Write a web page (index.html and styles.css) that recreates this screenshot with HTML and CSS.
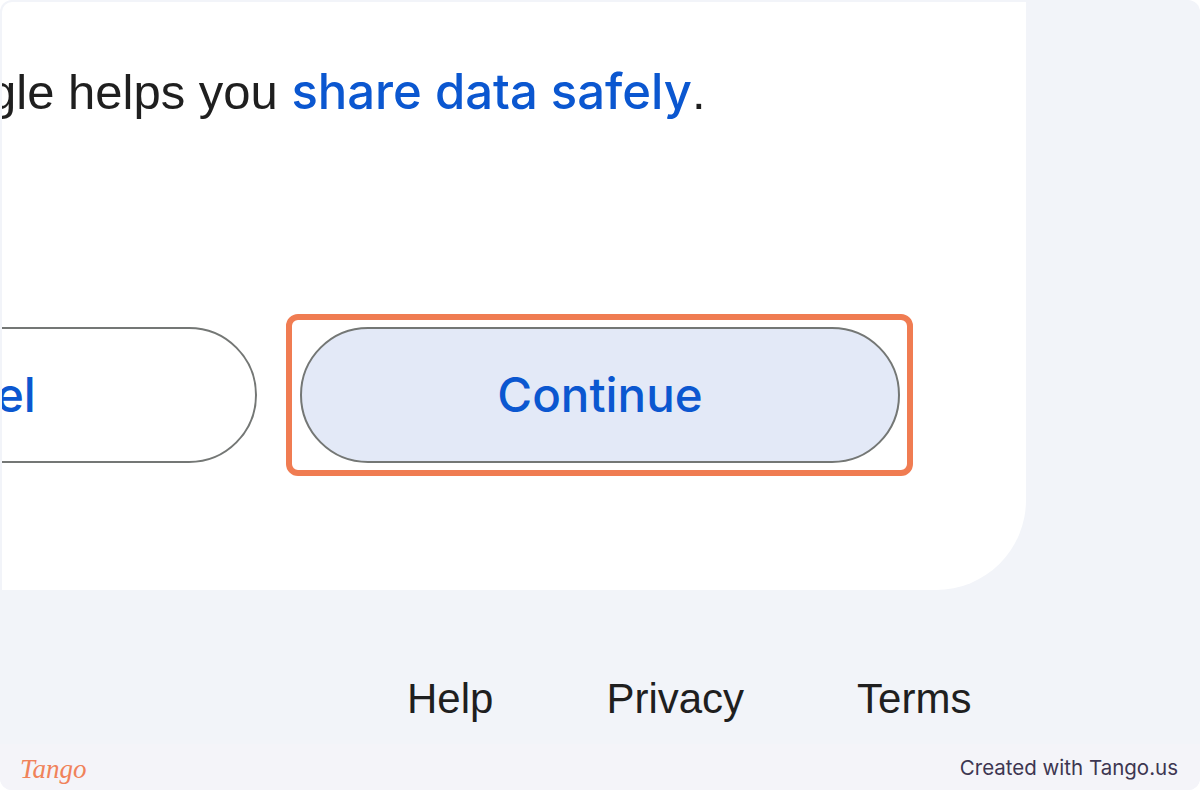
FILE: index.html
```html
<!DOCTYPE html>
<html lang="en">
<head>
<meta charset="utf-8">
<title>Continue</title>
<link rel="stylesheet" href="styles.css">
</head>
<body>
<div class="frame">
  <main class="stage">
    <section class="card">
      <p class="lead">gle helps you <a class="lead-link" href="#">share data safely</a>.</p>
      <div class="actions">
        <button class="btn btn-outline" type="button">Cancel</button>
        <div class="focus-wrap">
          <button class="btn btn-tonal" type="button">Continue</button>
          <span class="highlight"></span>
        </div>
      </div>
    </section>
    <nav class="links">
      <a class="link" href="#">Help</a>
      <a class="link" href="#">Privacy</a>
      <a class="link" href="#">Terms</a>
    </nav>
  </main>
  <footer class="tango-bar">
    <span class="tango-logo">Tango</span>
    <span class="tango-credit">Created with Tango.us</span>
  </footer>
</div>
</body>
</html>
```

FILE: styles.css
```css
* { box-sizing: border-box; }

html, body {
  margin: 0;
  padding: 0;
  background: #ffffff;
}

.frame {
  width: 1200px;
  height: 790px;
  border-radius: 12px;
  background: #f2f4f9;
  overflow: hidden;
  display: flex;
  flex-direction: column;
}

.stage {
  flex: 1;
  display: flex;
  flex-direction: column;
  padding: 2px 0 0 2px;
}

.card {
  width: 1024px;
  height: 588px;
  background: #ffffff;
  border-radius: 10px 0 90px 0;
  overflow: hidden;
  padding-top: 61px;
}

.lead {
  margin: 0 0 0 -13px;
  font-family: "Liberation Sans", Arial, sans-serif;
  font-size: 49px;
  line-height: 1.2;
  color: #1f1f1f;
  white-space: nowrap;
}

.lead-link {
  font-family: Inter, "Liberation Sans", sans-serif;
  color: #0b57d0;
  font-weight: 500;
  text-decoration: none;
}

.actions {
  display: flex;
  gap: 43px;
  margin: 205px 0 0 -345px;
}

.btn {
  width: 600px;
  height: 136px;
  border: 2px solid #747775;
  border-radius: 68px;
  font-family: Inter, "Liberation Sans", sans-serif;
  font-size: 47.5px;
  font-weight: 500;
  color: #0b57d0;
  padding: 0;
  flex: none;
}

.btn-outline { background: #ffffff; }
.btn-tonal { background: #e3e9f7; }

.focus-wrap {
  position: relative;
  display: flex;
}

.highlight {
  position: absolute;
  top: -13px;
  bottom: -13px;
  left: -14px;
  right: -13px;
  border: 6px solid #f07c52;
  border-radius: 12px;
}

.links {
  display: flex;
  gap: 113px;
  margin: 88px 0 0 405px;
}

.link {
  font-family: "Liberation Sans", Arial, sans-serif;
  font-size: 42px;
  line-height: 1;
  color: #1f1f1f;
  text-decoration: none;
}

.tango-bar {
  height: 46px;
  flex: none;
  background: #f4f4f9;
  display: flex;
  align-items: center;
  justify-content: space-between;
  padding: 0 22px 0 20px;
}

.tango-logo {
  font-family: "Liberation Serif", serif;
  font-style: italic;
  font-size: 27px;
  color: #f0825a;
  margin-top: 4px;
}

.tango-credit {
  font-family: Inter, "Noto Sans", sans-serif;
  font-size: 20.5px;
  color: #3d3651;
}
```
